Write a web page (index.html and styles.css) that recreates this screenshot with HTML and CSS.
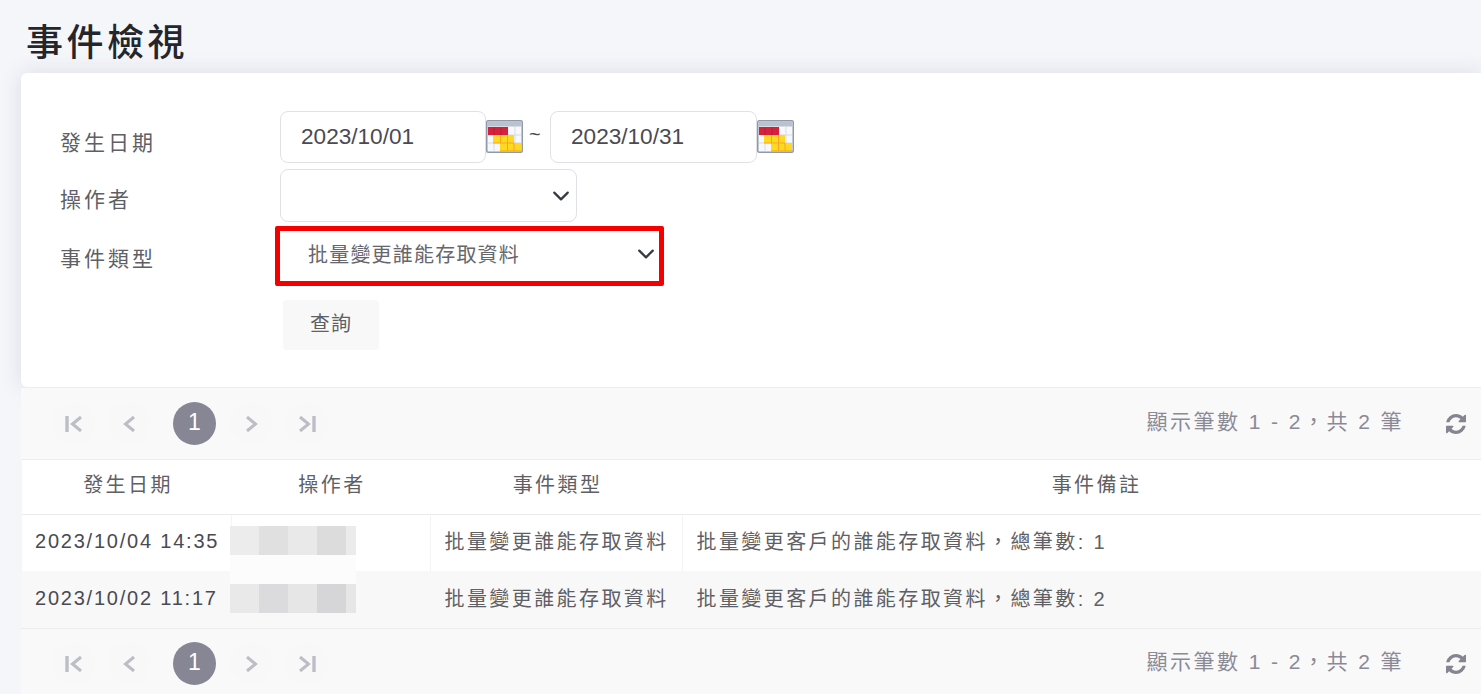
FILE: index.html
```html
<!DOCTYPE html>
<html lang="zh-Hant">
<head>
    <meta name="viewport" content="width=device-width, initial-scale=1">
    <meta charset="utf-8">
    <title>事件檢視</title>
    <link rel="stylesheet" href="styles.css">
</head>
<body>

<svg class="defs" width="0" height="0">
  <symbol id="cal" viewBox="0 0 37 33">
    <rect x="0.75" y="0.75" width="35.5" height="31.5" rx="1.5" fill="#f6f8fc" stroke="#8f99a8" stroke-width="1.5"/>
    <rect x="1.500" y="1.500" width="34" height="5" fill="#b9c2ce"/>
    <path d="M8 7v24M15 7v24M22 7v24M29 7v24M2 15h33M2 23h33" stroke="#d5dce8" fill="none"/>
    <rect x="2" y="7" width="20" height="8" fill="#d4213c"/>
    <path d="M8 7v8M15 7v8" stroke="#c01a34" fill="none"/>
    <rect x="7" y="15" width="21" height="8" fill="#ffd81f"/>
    <rect x="14" y="23" width="21" height="8" fill="#ffd81f"/>
    <path d="M14.500 15v8M21.500 15v16M28 23v8M7 23h21M14 31h21" stroke="#f5a623" fill="none"/>
  </symbol>
  <symbol id="first" viewBox="0 0 18 18">
    <path d="M2 1v16" stroke="currentColor" stroke-width="3.4" fill="none"/>
    <path d="M16 2L7.5 9l8.5 7" stroke="currentColor" stroke-width="3" fill="none"/>
  </symbol>
  <symbol id="prev" viewBox="0 0 14 18">
    <path d="M12 2L3.5 9l8.5 7" stroke="currentColor" stroke-width="3" fill="none"/>
  </symbol>
  <symbol id="next" viewBox="0 0 14 18">
    <path d="M2 2l8.500 7L2 16" stroke="currentColor" stroke-width="3" fill="none"/>
  </symbol>
  <symbol id="last" viewBox="0 0 18 18">
    <path d="M2 2l8.500 7L2 16" stroke="currentColor" stroke-width="3" fill="none"/>
    <path d="M16 1v16" stroke="currentColor" stroke-width="3.400" fill="none"/>
  </symbol>
  <symbol id="refresh" viewBox="128 128 1536 1536">
    <path fill="currentColor" d="M1639 1056q0 5-1 7-64 268-268 434.5t-478 166.5q-146 0-282.5-55t-243.5-157l-129 129q-19 19-45 19t-45-19-19-45v-448q0-26 19-45t45-19h448q26 0 45 19t19 45-19 45l-137 137q71 66 161 102t187 36q134 0 250-65t186-179q11-17 53-117 8-23 30-23h192q13 0 22.5 9.5t9.5 22.5zm25-800v448q0 26-19 45t-45 19h-448q-26 0-45-19t-19-45 19-45l138-138q-148-137-349-137-134 0-250 65t-186 179q-11 17-53 117-8 23-30 23h-199q-13 0-22.5-9.5t-9.5-22.5v-7q65-268 270-434.5t480-166.5q146 0 284 55.5t245 156.5l130-129q19-19 45-19t45 19 19 45z"/>
  </symbol>
</svg>

<div class="page">
  <h1 class="page-title">事件檢視</h1>

  <!-- search form -->
  <form class="search-card">
    <label class="field-label label-date">發生日期</label>
    <div class="date-range">
      <input class="text-input" type="text" value="2023/10/01">
      <svg class="cal-icon"><use href="#cal"/></svg>
      <span class="tilde">~</span>
      <input class="text-input input-end" type="text" value="2023/10/31">
      <svg class="cal-icon"><use href="#cal"/></svg>
    </div>

    <label class="field-label label-user">操作者</label>
    <div><select class="select-input select-user"><option></option></select></div>

    <label class="field-label label-type">事件類型</label>
    <div class="type-cell"><select class="select-input select-type"><option>批量變更誰能存取資料</option></select></div>

    <div class="button-cell"><button class="search-btn" type="button">查詢</button></div>
  </form>

  <div class="grid-wrap">
    <!-- pager top -->
    <div class="pager">
      <div class="pager-nav">
        <a class="page-btn"><svg class="ico-wide"><use href="#first"/></svg></a>
        <a class="page-btn"><svg class="ico-thin"><use href="#prev"/></svg></a>
        <a class="page-num">1</a>
        <a class="page-btn"><svg class="ico-thin"><use href="#next"/></svg></a>
        <a class="page-btn"><svg class="ico-wide"><use href="#last"/></svg></a>
      </div>
      <span class="pager-info">顯示筆數 1 - 2，共 2 筆</span>
      <svg class="ico-refresh"><use href="#refresh"/></svg>
    </div>

    <!-- results -->
    <div class="table-wrap">
      <table class="result-table">
        <colgroup>
          <col class="col-date"><col class="col-user"><col class="col-type"><col class="col-note">
        </colgroup>
        <thead>
          <tr><th>發生日期</th><th>操作者</th><th>事件類型</th><th>事件備註</th></tr>
        </thead>
        <tbody>
          <tr class="row-first">
            <td class="cell-date">2023/10/04 14:35</td><td></td>
            <td>批量變更誰能存取資料</td><td>批量變更客戶的誰能存取資料，總筆數: 1</td>
          </tr>
          <tr class="row-alt">
            <td class="cell-date">2023/10/02 11:17</td><td></td>
            <td>批量變更誰能存取資料</td><td>批量變更客戶的誰能存取資料，總筆數: 2</td>
          </tr>
        </tbody>
      </table>
      <div class="mosaic">
        <div class="mosaic-row"><i class="m1"></i><i class="m2"></i><i class="m3"></i><i class="m4"></i><i class="m5"></i></div>
        <div class="mosaic-gap"></div>
        <div class="mosaic-row dim"><i class="m1"></i><i class="m2"></i><i class="m3"></i><i class="m4"></i><i class="m5"></i></div>
      </div>
    </div>

    <!-- pager bottom -->
    <div class="pager pager-bottom">
      <div class="pager-nav">
        <a class="page-btn"><svg class="ico-wide"><use href="#first"/></svg></a>
        <a class="page-btn"><svg class="ico-thin"><use href="#prev"/></svg></a>
        <a class="page-num">1</a>
        <a class="page-btn"><svg class="ico-thin"><use href="#next"/></svg></a>
        <a class="page-btn"><svg class="ico-wide"><use href="#last"/></svg></a>
      </div>
      <span class="pager-info">顯示筆數 1 - 2，共 2 筆</span>
      <svg class="ico-refresh"><use href="#refresh"/></svg>
    </div>
  </div>
</div>

</body>
</html>
```

FILE: styles.css
```css
* {
  box-sizing: border-box;
}
html,
body {
  height: 100%;
}
body {
  margin: 0;
  background: #f5f6fa;
  color: #4a4a52;
  font-family: "Liberation Sans", "Noto Sans CJK TC", sans-serif;
  overflow: hidden;
}
.defs {
  position: absolute;
}
.page {
  padding-left: 21px;
  width: 1481px;
}
.page-title {
  margin: 0;
  padding: 18px 0 0 5px;
  height: 73px;
  font-size: 37px;
  line-height: 52px;
  font-weight: 500;
  letter-spacing: 3.5px;
  color: #25262b;
}

/* search form */
.search-card {
  display: grid;
  grid-template-columns: 220px 1fr;
  grid-template-rows: 58px 57px 74px 50px;
  height: 314px;
  padding: 38px 0 0 39px;
  background: #fff;
  border-radius: 6px 0 0 6px;
  box-shadow: 0 0 22px rgba(40, 40, 70, 0.12);
}
.field-label {
  font-size: 21px;
  letter-spacing: 3px;
  color: #5f5f66;
}
.label-date {
  padding-top: 15px;
}
.label-user {
  padding-top: 14px;
}
.label-type {
  padding-top: 16px;
}
.date-range {
  display: flex;
  align-items: flex-start;
  height: 52px;
}
.text-input {
  width: 206px;
  height: 52px;
  padding: 0 20px;
  border: 1px solid #dee2e6;
  border-radius: 8px;
  background: #fff;
  color: #4a4a52;
  font: 22.600px "Liberation Sans", sans-serif;
}
.input-end {
  width: 207px;
}
.cal-icon {
  width: 37px;
  height: 33px;
  margin-top: 9px;
  flex: none;
}
.tilde {
  width: 27px;
  padding-left: 6px;
  font-size: 20px;
  line-height: 46px;
}
.select-input {
  display: block;
  appearance: none;
  background-color: #fff;
  background-image: url("data:image/svg+xml,%3csvg xmlns='http://www.w3.org/2000/svg' viewBox='0 0 16 16'%3e%3cpath fill='none' stroke='%23343a40' stroke-linecap='round' stroke-linejoin='round' stroke-width='2' d='m2 5 6 6 6-6'/%3e%3c/svg%3e");
  background-repeat: no-repeat;
  background-size: 18px 18px;
}
.select-user {
  width: 297px;
  height: 53px;
  border: 1px solid #dee2e6;
  border-radius: 8px;
  background-position: right 6px center;
}
.type-cell {
  margin-left: -5px;
  margin-top: 0;
}
/* red annotation frame drawn on the screenshot */
.select-type {
  width: 389px;
  height: 60px;
  padding: 0 0 5px 28px;
  border: 5px solid #f40000;
  border-radius: 2px;
  background-position: right 4px top 14px;
  font-size: 20px;
  letter-spacing: 1.2px;
  color: #66666c;
  font-family: "Noto Sans CJK TC", sans-serif;
}
.button-cell {
  grid-column: 2;
  padding-left: 3px;
}
.search-btn {
  width: 96px;
  height: 50px;
  padding: 0 0 5px;
  border: 0;
  border-radius: 4px;
  background: #f8f8f8;
  color: #5f5f66;
  font-size: 20px;
  letter-spacing: 1px;
  font-family: "Noto Sans CJK TC", sans-serif;
}

/* pager */
.pager {
  display: flex;
  align-items: center;
  height: 72px;
  padding: 0 15px 0 31px;
  background: #f9f9f9;
  border-top: 1px solid #ededed;
}
.pager-bottom {
  height: 66px;
  padding-top: 5px;
}
.pager-nav {
  display: flex;
  align-items: center;
  gap: 13px;
  color: #bdbdc5;
}
.page-btn {
  width: 43px;
  height: 43px;
  border-radius: 50%;
  display: flex;
  align-items: center;
  justify-content: center;
  background: #f8f8f8;
}
.pager-nav .page-btn:nth-child(2) {
  margin-left: -1px;
  margin-right: 10px;
}
.pager-nav .page-btn:nth-child(4) {
  margin-left: 1px;
  margin-right: -1px;
}
.ico-wide {
  width: 18px;
  height: 18px;
}
.ico-thin {
  width: 14px;
  height: 18px;
}
.page-num {
  width: 43px;
  height: 43px;
  border-radius: 50%;
  background: #868694;
  color: #fff;
  font-size: 23px;
  line-height: 41px;
  text-align: center;
}
.pager-info {
  margin-left: auto;
  padding-bottom: 8px;
  font-size: 21px;
  letter-spacing: 2.450px;
  color: #8a8a96;
}
.ico-refresh {
  width: 20px;
  height: 20px;
  margin-left: 42px;
  color: #85858f;
}

/* result table */
.table-wrap {
  position: relative;
  width: 1487px;
  margin-left: 1px;
}
.result-table {
  width: 1486px;
  table-layout: fixed;
  border-collapse: collapse;
  background: #fff;
  font-size: 20px;
  letter-spacing: 2.420px;
  color: #5f5f66;
}
.col-date {
  width: 209px;
}
.col-user {
  width: 199px;
}
.col-type {
  width: 252px;
}
.result-table th {
  height: 55px;
  padding: 0 0 7px 3px;
  font-weight: 400;
  border-top: 1px solid #ececec;
  border-bottom: 1px solid #ececec;
}
.result-table td {
  height: 57px;
  padding: 0 14px 4px;
  white-space: nowrap;
  border-left: 1px solid #f4f4f4;
}
.result-table .row-first td {
  height: 56px;
}
.result-table td:first-child {
  border-left: 0;
}
.result-table .row-alt td {
  background: #f8f8f8;
  border-left-color: #f8f8f8;
}
.result-table .cell-date {
  padding: 0 0 2px 13px;
  letter-spacing: 1.780px;
  color: #4a4a52;
}

/* blurred operator names */
.mosaic {
  position: absolute;
  left: 208px;
  top: 67px;
  width: 126px;
}
.mosaic-row {
  display: flex;
  height: 29px;
}
.mosaic-row i {
  width: 29px;
}
.mosaic-gap {
  height: 29px;
  background: #fcfcfc;
}
.mosaic-row .m1 {
  background: #ececec;
}
.mosaic-row .m2 {
  background: #e0e0e0;
}
.mosaic-row .m3 {
  background: #e9e9e9;
}
.mosaic-row .m4 {
  background: #dcdcdc;
}
.mosaic-row .m5 {
  width: 10px;
  background: #ebebeb;
}
.mosaic-row.dim .m1 {
  background: #e9e9ea;
}
.mosaic-row.dim .m2 {
  background: #dbdbdd;
}
.mosaic-row.dim .m3 {
  background: #e6e6e7;
}
.mosaic-row.dim .m4 {
  background: #d6d6d8;
}
.mosaic-row.dim .m5 {
  background: #e6e6e7;
}
```
